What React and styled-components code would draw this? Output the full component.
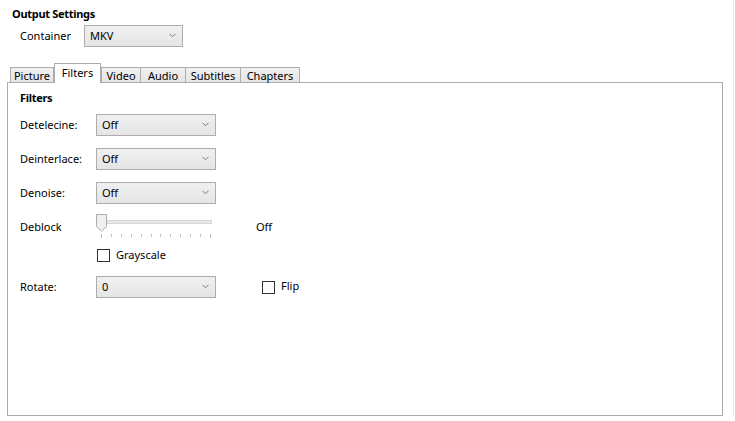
import React from "react";
import styled, { createGlobalStyle } from "styled-components";

const Global = createGlobalStyle`
  html, body { margin: 0; padding: 0; background: #ffffff; }
  body {
    font-family: "Segoe UI", "Noto Sans", "Open Sans", sans-serif;
    font-size: 11px;
    color: #000000;
  }
  * { box-sizing: border-box; }
`;

const Page = styled.div`
  width: 734px;
  height: 416px;
  border-right: 1px solid #dde4ec;
  display: flex;
  flex-direction: column;
`;

const Title = styled.div`
  margin: 6px 0 0 12px;
  font-weight: 700;
  letter-spacing: -0.3px;
  line-height: 16px;
  flex: none;
`;

const ContainerRow = styled.div`
  margin: 3px 0 0 20px;
  display: flex;
  align-items: center;
  height: 22px;
  flex: none;
`;

const Label = styled.div`
  width: ${(p) => p.$w || 76}px;
  line-height: 16px;
  flex: none;
`;

const Combo = styled.div`
  width: ${(p) => p.$w}px;
  height: 22px;
  border: 1px solid #adadad;
  background: linear-gradient(#f0f0f0, #e5e5e5);
  display: flex;
  align-items: center;
  justify-content: space-between;
  padding: 0 6px 1px 5px;
  line-height: 16px;
  flex: none;
`;

const Chevron = () => (
  <svg width="7" height="5" viewBox="0 0 7 5">
    <path d="M0.5 0.8 L3.5 3.8 L6.5 0.8" fill="none" stroke="#7a7a7a" strokeWidth="1" />
  </svg>
);

const Dropdown = ({ value, w }) => (
  <Combo $w={w}>
    <span>{value}</span>
    <Chevron />
  </Combo>
);

const TabArea = styled.div`
  margin: 16px 0 0 7px;
  width: 716px;
  display: flex;
  flex-direction: column;
  flex: none;
`;

const TabStrip = styled.div`
  display: flex;
  align-items: flex-end;
  padding-left: 3px;
  height: 19px;
  flex: none;
`;

const Tab = styled.div`
  position: relative;
  width: ${(p) => p.$w}px;
  height: ${(p) => (p.$active ? 20 : 15)}px;
  margin-bottom: ${(p) => (p.$active ? -1 : 0)}px;
  margin-left: ${(p) => (p.$overlap ? -1 : 0)}px;
  border: 1px solid #acacac;
  border-bottom: none;
  background: ${(p) => (p.$active ? "#ffffff" : "linear-gradient(#f0f0f0, #e5e5e5)")};
  z-index: ${(p) => (p.$active ? 2 : 1)};
  display: flex;
  justify-content: center;
  align-items: flex-start;
  padding-top: ${(p) => (p.$active ? 1 : 0)}px;
  line-height: 15px;
  white-space: nowrap;
  flex: none;
`;

const Panel = styled.div`
  height: 334px;
  border: 1px solid #acacac;
  padding: 7px 12px;
  display: flex;
  flex-direction: column;
  flex: none;
`;

const Heading = styled.div`
  font-weight: 700;
  letter-spacing: -0.3px;
  line-height: 16px;
`;

const Form = styled.div`
  margin-top: 8px;
  display: flex;
  flex-direction: column;
`;

const Row = styled.div`
  display: flex;
  align-items: center;
  height: 22px;
  margin-top: ${(p) => p.$mt || 0}px;
`;

const SliderRow = styled.div`
  display: flex;
  align-items: flex-start;
  height: 24px;
  margin-top: 10px;
`;

const SliderLabel = styled(Label)`
  padding-top: 5px;
`;

const Slider = styled.div`
  position: relative;
  width: 116px;
  height: 24px;
  display: flex;
  flex-direction: column;
  flex: none;
`;

const Track = styled.div`
  margin-top: 6px;
  height: 4px;
  background: #e7eaea;
  border: 1px solid #d6d6d6;
`;

const Ticks = styled.div`
  margin-top: 10px;
  padding: 0 1px 0 5px;
  display: flex;
  justify-content: space-between;
  align-items: flex-start;
`;

const TickMark = styled.span`
  width: 1px;
  height: ${(p) => (p.$edge ? 4 : 3)}px;
  background: #c4c4c4;
`;

const Thumb = styled.svg`
  position: absolute;
  left: 0;
  top: 0;
`;

const SliderValue = styled.div`
  margin-left: 44px;
  padding-top: 5px;
  line-height: 16px;
`;

const CheckRow = styled.div`
  display: flex;
  align-items: center;
  margin-left: ${(p) => p.$ml || 0}px;
  margin-top: ${(p) => p.$mt || 0}px;
  height: ${(p) => p.$h || 13}px;
  gap: 6px;
`;

const Box = styled.span`
  width: 13px;
  height: 13px;
  border: 1px solid #333333;
  background: #ffffff;
  flex: none;
`;

const CheckText = styled.span`
  line-height: 16px;
  margin-top: -2px;
`;

const tabs = [
  { name: "Picture", w: 44 },
  { name: "Filters", w: 47 },
  { name: "Video", w: 40 },
  { name: "Audio", w: 46 },
  { name: "Subtitles", w: 56 },
  { name: "Chapters", w: 60 },
];
const activeTab = 1;

const filterRows = [
  { label: "Detelecine:", value: "Off" },
  { label: "Deinterlace:", value: "Off" },
  { label: "Denoise:", value: "Off" },
];

export default function App() {
  return (
    <>
      <Global />
      <Page>
        <Title>Output Settings</Title>
        <ContainerRow>
          <Label $w={64}>Container</Label>
          <Dropdown value="MKV" w={99} />
        </ContainerRow>
        <TabArea>
          <TabStrip>
            {tabs.map((t, i) => (
              <Tab
                key={t.name}
                $w={t.w}
                $active={i === activeTab}
                $overlap={i > 0 && i !== activeTab && i - 1 !== activeTab}
              >
                {t.name}
              </Tab>
            ))}
          </TabStrip>
          <Panel>
            <Heading>Filters</Heading>
            <Form>
              {filterRows.map((r, i) => (
                <Row key={r.label} $mt={i === 0 ? 0 : 12}>
                  <Label>{r.label}</Label>
                  <Dropdown value={r.value} w={120} />
                </Row>
              ))}
              <SliderRow>
                <SliderLabel>Deblock</SliderLabel>
                <Slider>
                  <Track />
                  <Ticks>
                    {Array.from({ length: 12 }).map((_, i) => (
                      <TickMark key={i} $edge={i === 0 || i === 11} />
                    ))}
                  </Ticks>
                  <Thumb width="12" height="18" viewBox="0 0 12 18">
                    <path
                      d="M0.5 0.5 H10.5 V12.5 L5.5 17.2 L0.5 12.5 Z"
                      fill="#f0f0f0"
                      stroke="#acacac"
                    />
                  </Thumb>
                </Slider>
                <SliderValue>Off</SliderValue>
              </SliderRow>
              <CheckRow $ml={77} $mt={11}>
                <Box />
                <CheckText>Grayscale</CheckText>
              </CheckRow>
              <Row $mt={14}>
                <Label>Rotate:</Label>
                <Dropdown value="0" w={120} />
                <CheckRow $ml={46} $h={22}>
                  <Box />
                  <CheckText>Flip</CheckText>
                </CheckRow>
              </Row>
            </Form>
          </Panel>
        </TabArea>
      </Page>
    </>
  );
}
